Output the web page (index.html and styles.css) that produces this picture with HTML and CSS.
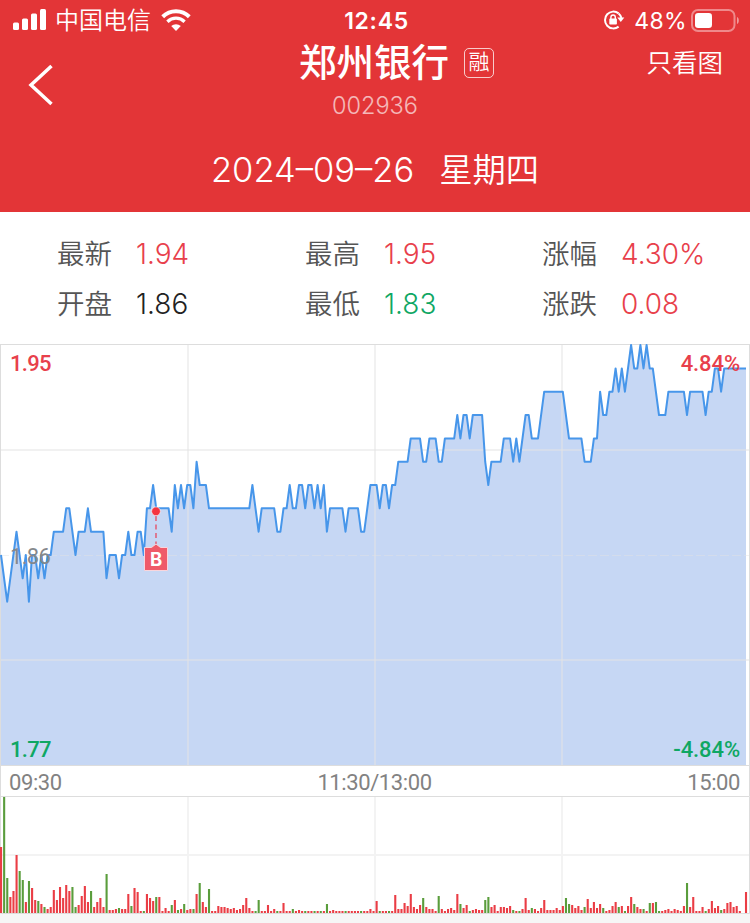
FILE: index.html
```html
<!DOCTYPE html>
<html lang="zh-CN">
<head>
<meta charset="utf-8">
<title>郑州银行 002936</title>
<link rel="stylesheet" href="styles.css">
</head>
<body>
<header class="header">
  <div class="status">
    <div class="status-left">
      <svg class="signal" width="34" height="22" viewBox="0 0 34 22" fill="#fff"><rect x="0" y="13.5" width="6" height="7.5" rx="1.5"/><rect x="9" y="9.5" width="6" height="11.5" rx="1.5"/><rect x="18" y="4.5" width="6" height="16.5" rx="1.5"/><rect x="27" y="0" width="6" height="21" rx="1.5"/></svg>
      <span class="carrier">中国电信</span>
      <svg class="wifi" width="30" height="22" viewBox="0 0 30 22" fill="none" stroke="#fff"><path d="M1.7 7.8a19 19 0 0 1 26.6 0" stroke-width="4"/><path d="M6.4 12.7a12.3 12.3 0 0 1 17.2 0" stroke-width="3.3"/><path d="M15 22l-4.8-4.9a7 7 0 0 1 9.6 0z" fill="#fff" stroke="none"/></svg>
    </div>
    <div class="clock">12:45</div>
    <div class="status-right">
      <svg class="lock" width="22" height="20" viewBox="0 0 22 20"><path d="M15.6 3.4A8.4 8.4 0 1 0 15.6 16.6" fill="none" stroke="#fff" stroke-width="2"/><path d="M15.6 3.4A8.4 8.4 0 0 1 18.4 8" fill="none" stroke="#fff" stroke-width="2"/><path d="M14.3 7.6h7L17.8 12z" fill="#fff"/><rect x="6.3" y="8.6" width="7.6" height="6" rx=".8" fill="#fff"/><path d="M7.9 9V7.2a2.2 2.2 0 0 1 4.4 0V9" fill="none" stroke="#fff" stroke-width="1.4"/></svg>
      <span class="percent">48%</span>
      <svg class="battery" width="49" height="23" viewBox="0 0 49 23"><rect x="1" y="1" width="42.5" height="21" rx="6" fill="none" stroke="#fff" stroke-opacity=".42" stroke-width="2"/><rect x="4" y="4" width="17" height="15" rx="3.2" fill="#fff"/><path d="M46 8c2.4.8 2.4 6.2 0 7z" fill="#fff" fill-opacity=".5"/></svg>
    </div>
  </div>
  <div class="titlebar">
    <svg class="back" width="26" height="42" viewBox="0 0 26 42"><path d="M23.5 2L3 21l20.5 19" fill="none" stroke="#fff" stroke-width="3.5"/></svg>
    <div class="title">
      <div class="name-row"><h1 class="name">郑州银行</h1><span class="tag">融</span></div>
      <div class="code">002936</div>
    </div>
    <div class="action">只看图</div>
  </div>
  <div class="date"><span class="day">2024–09–26</span><span class="week">星期四</span></div>
</header>

<section class="quotes">
  <div class="quote"><span class="key">最新</span><span class="val up">1.94</span></div>
  <div class="quote"><span class="key">最高</span><span class="val up">1.95</span></div>
  <div class="quote"><span class="key">涨幅</span><span class="val up">4.30%</span></div>
  <div class="quote"><span class="key">开盘</span><span class="val">1.86</span></div>
  <div class="quote"><span class="key">最低</span><span class="val down">1.83</span></div>
  <div class="quote"><span class="key">涨跌</span><span class="val up">0.08</span></div>
</section>

<section class="price">
  <svg id="price" width="750" height="422" viewBox="0 344 750 422"></svg>
  <span class="label top left up">1.95</span>
  <span class="label top right up">4.84%</span>
  <span class="label mid left">1.86</span>
  <span class="label bottom left down">1.77</span>
  <span class="label bottom right down">-4.84%</span>
</section>
<div class="times"><span>09:30</span><span>11:30/13:00</span><span>15:00</span></div>
<section class="volume"><svg id="volume" width="750" height="118" viewBox="0 796 750 118"></svg></section>
<script src="chart.js"></script>
</body>
</html>
```
FILE: styles.css
```css
* { box-sizing: border-box; }
body {
  margin: 0;
  width: 750px;
  height: 923px;
  overflow: hidden;
  background: #f6f6f6;
  font-family: Inter, "Noto Sans CJK SC", sans-serif;
}
svg { display: block; flex: none; }
.header { height: 212px; background: #e33537; color: #fff; }
.status {
  display: grid;
  grid-template-columns: 1fr auto 1fr;
  align-items: center;
  height: 40px;
  padding: 0 10px 0 13px;
}
.status-left, .status-right { display: flex; align-items: center; }
.status-right { justify-content: flex-end; }
.signal { margin-right: 8px; }
.carrier { font-size: 24px; font-weight: 350; line-height: 40px; position: relative; top: 1px; }
.wifi { margin-left: 10px; }
.clock { font-size: 23px; font-weight: 600; letter-spacing: 0.7px; padding-top: 1px; }
.lock { margin-right: 9px; }
.percent { font-size: 23px; letter-spacing: 0.4px; margin-right: 4px; padding-top: 1px; }
.titlebar {
  display: grid;
  grid-template-columns: 250px 1fr 250px;
  height: 88px;
}
.back { margin: 24px 0 0 28px; }
.title { text-align: center; }
.name-row { display: flex; align-items: center; height: 46px; padding-left: 49px; }
.name { margin: 0; font-size: 37.5px; font-weight: 500; line-height: 46px; white-space: nowrap; }
.tag {
  width: 30px;
  height: 30px;
  margin-left: 15px;
  border: 1.5px solid rgba(255, 255, 255, .75);
  border-radius: 5px;
  font-size: 21px;
  font-weight: 350;
  line-height: 26px;
}
.code { margin-top: 4px; font-size: 23.5px; font-weight: 300; line-height: 32px; opacity: .65; }
.action { padding: 4px 27px 0 0; text-align: right; font-size: 25.5px; font-weight: 350; line-height: 38px; }
.date { display: flex; justify-content: center; gap: 25px; font-size: 33.3px; font-weight: 350; line-height: 84px; }
.day { font-size: 34.5px; font-weight: 300; }
.quotes {
  display: grid;
  grid-template-columns: 248px 237px 1fr;
  grid-auto-rows: 50px;
  height: 132px;
  padding: 17px 0 0 57px;
  background: #fff;
}
.quote { display: flex; align-items: center; gap: 24px; line-height: 50px; }
.key { font-size: 27.5px; font-weight: 350; color: #555; }
.val { font-size: 28px; font-weight: 300; color: #222; }
.val.up, .label.up { color: #e8404b; }
.val.down, .label.down { color: #0fa763; }
.price { position: relative; height: 422px; background: #fff; }
.label {
  position: absolute;
  font: 500 22px/26px Roboto, sans-serif;
  letter-spacing: -0.7px;
  color: #85888c;
}
.left { left: 10px; }
.right { right: 10px; letter-spacing: -0.1px; }
.mid { top: 200px; font-weight: 400; }
.top { top: 7px; }
.bottom { bottom: 3px; }
.times {
  display: grid;
  grid-template-columns: 1fr auto 1fr;
  height: 30px;
  padding: 0 9px 0 8px;
  background: #fff;
  border: solid #ddd;
  border-width: 0 1px;
  font: 400 22px/34px Roboto, sans-serif;
  letter-spacing: -0.4px;
  color: #828282;
}
.times span:last-child { text-align: right; }
.volume { height: 118px; background: #fff; }
```
FILE: chart.js
```js
const STEP = 3.104;
const UNIT = 23.33;
const BASE = 555;

// Turning points as [minute, ticks above the previous close]; values between are linear.
const turns = [
  [0,0],[2,-2],[5,1],[7,-1],[8,0],[9,-2],[10,0],[11,0],[12,-1],[13,0],[14,-1],[15,0],[16,0],[17,1],[20,1],
  [21,2],[22,2],[24,0],[25,1],[27,1],[28,2],[29,1],[33,1],[34,-1],[35,0],[37,0],[38,-1],[39,0],[40,0],[41,1],
  [42,0],[43,0],[44,1],[45,1],[46,0],[47,2],[48,2],[49,3],[50,2],[54,2],[55,1],[56,3],[57,2],[58,3],[59,2],
  [60,3],[61,3],[62,2],[63,4],[64,3],[66,3],[67,2],[80,2],[81,3],[83,1],[84,2],[88,2],[89,1],[90,1],[91,2],
  [92,2],[93,3],[94,2],[95,2],[96,3],[97,3],[98,2],[99,3],[100,3],[101,2],[102,3],[103,2],[104,3],[105,1],
  [106,2],[110,2],[111,1],[112,2],[115,2],[116,1],[117,1],[119,3],[121,3],[122,2],[123,3],[124,3],[125,2],
  [126,3],[127,3],[128,4],[131,4],[132,5],[135,5],[136,4],[137,4],[138,5],[140,5],[141,4],[142,4],[143,5],
  [146,5],[147,6],[148,5],[149,6],[150,6],[151,5],[152,6],[155,6],[156,4],[157,3],[158,4],[161,4],[162,5],
  [164,5],[165,4],[166,5],[167,4],[169,6],[170,6],[171,5],[173,5],[175,7],[181,7],[183,5],[187,5],[188,4],
  [190,4],[191,5],[192,5],[193,7],[194,6],[195,6],[196,7],[197,7],[198,8],[199,7],[200,8],[201,7],[203,9],
  [204,8],[205,8],[206,9],[207,8],[208,9],[209,8],[210,8],[212,6],[214,6],[215,7],[220,7],[221,6],[222,7],
  [226,7],[227,6],[228,7],[229,7],[230,8],[231,8],[232,7],[233,8],[240,8]
];

// Volume per minute; a negative value is a falling minute.
const volumes = [
  66,-116,-35,16,22,58,-42,-33,11,-32,25,13,-12,9,-6,4,6,23,13,26,
  15,28,22,-26,-6,8,17,27,11,-22,6,11,15,6,-39,3,3,4,-5,4,
  4,19,-7,25,21,2,-2,19,15,12,-16,16,2,5,2,-8,13,-3,4,-9,
  3,4,-4,19,-30,11,6,-24,2,2,7,6,6,5,4,5,3,4,8,15,
  5,2,-2,-13,2,2,8,2,4,-2,2,10,2,2,-4,2,3,2,-2,2,
  2,-2,2,-2,2,-9,2,3,2,2,2,-2,2,2,2,2,-2,2,2,4,
  2,12,-2,2,2,-2,2,18,4,4,10,7,19,6,4,8,-15,6,4,4,
  2,-17,4,2,4,5,3,19,-9,5,8,-2,3,4,3,3,-13,-16,6,8,
  2,6,6,5,7,-3,2,-2,4,15,3,-5,4,2,5,13,3,3,3,5,
  3,7,-15,-9,8,5,7,3,-6,14,5,11,5,9,-5,2,3,7,11,-6,
  7,-2,7,16,-9,6,4,-4,2,-10,10,-11,-2,2,3,4,2,4,3,2,
  7,-30,6,16,2,2,6,-2,4,12,5,7,-3,4,10,11,6,7,2,0,21
];

const line = turns.map(([m, t]) => `${(1 + m * STEP).toFixed(1)},${(BASE - t * UNIT).toFixed(1)}`).join(' ');
const verticals = (top, bottom, color) => [187, 374, 561]
  .map(x => `<rect x="${x}" y="${top}" width="2" height="${bottom - top}" fill="${color}"/>`).join('');

document.getElementById('price').innerHTML = `
  <polygon points="1,765 ${line} 746,765" fill="#c6d7f4"/>
  <g>${verticals(345, 765, 'rgba(227,227,227,.5)')}
    <rect y="449" width="749" height="2" fill="rgba(227,227,227,.5)"/>
    <rect y="659" width="749" height="2" fill="rgba(227,227,227,.5)"/>
    <path d="M0 555.5H749" stroke="rgba(227,227,227,.45)" stroke-dasharray="9 3"/></g>
  <rect x=".5" y="344.5" width="749" height="421" fill="none" stroke="#ddd"/>
  <polyline points="${line}" fill="none" stroke="#4796ea" stroke-width="2" stroke-linejoin="round"/>
  <path d="M156 516V547" stroke="#e0637b" stroke-width="1.6" stroke-dasharray="5 3.5"/>
  <circle cx="156" cy="511.3" r="4.4" fill="#f5333f" stroke="#fff" stroke-opacity=".6"/>
  <path d="M144.5 547.5H151.5l4.5-3.5 4.5 3.5h7v23h-23z" fill="#ef5a69" stroke="#f9d5dc"/>
  <text x="156" y="566" text-anchor="middle" font-family="Inter" font-weight="700" font-size="18.5" fill="#fff">B</text>`;

document.getElementById('volume').innerHTML = `
  ${verticals(797, 913, '#f3f3f3')}
  <rect y="854" width="749" height="2" fill="#f3f3f3"/>
  <path d="M0 796.5H749.5V913.5H.5V796" fill="none" stroke="#ddd"/>
  ${volumes.map((v, i) => `<rect x="${(i * STEP).toFixed(2)}" y="${913 - Math.abs(v)}" width="2.1" height="${Math.abs(v)}" fill="${v < 0 ? '#5a9d3c' : '#ea3d45'}"/>`).join('')}`;
```
